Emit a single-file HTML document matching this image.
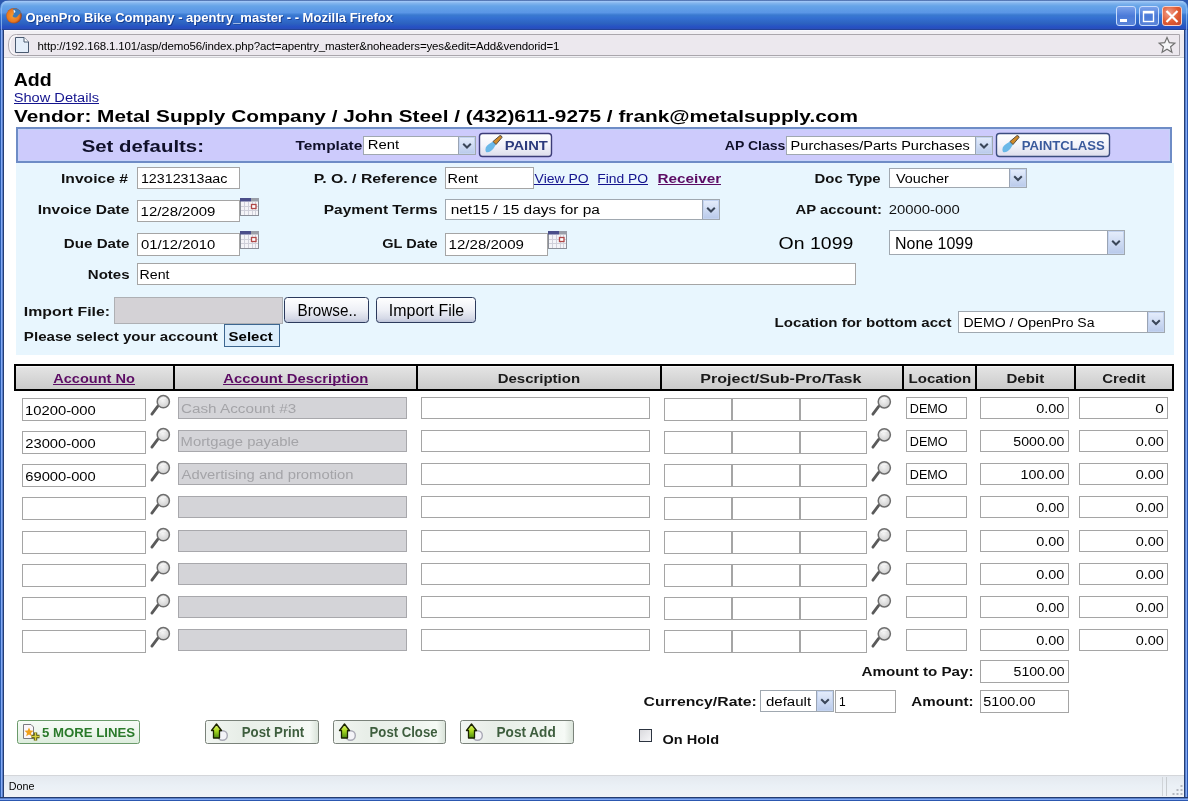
<!DOCTYPE html>
<html><head><meta charset="utf-8"><title>OpenPro</title>
<style>html,body{margin:0;padding:0;background:#fff;overflow:hidden;width:1188px;height:801px}svg{display:block;will-change:transform}text{font-family:"Liberation Sans",sans-serif;white-space:pre}</style>
</head><body>
<svg width="1188" height="801" viewBox="0 0 1188 801" font-family="Liberation Sans, sans-serif">
<defs>
<linearGradient id="gTitle" gradientUnits="userSpaceOnUse" x1="0" y1="0" x2="0" y2="30">
<stop offset="0" stop-color="#1c3f88"/><stop offset="0.04" stop-color="#a8ccf8"/><stop offset="0.1" stop-color="#84b6ee"/>
<stop offset="0.2" stop-color="#66a4e8"/><stop offset="0.42" stop-color="#5a96e6"/><stop offset="0.5" stop-color="#3a7ad0"/>
<stop offset="0.6" stop-color="#3470d2"/><stop offset="0.78" stop-color="#2c62c0"/><stop offset="0.9" stop-color="#2650c4"/>
<stop offset="0.96" stop-color="#2a4eb8"/><stop offset="1" stop-color="#1e3a80"/></linearGradient>
<linearGradient id="gHead" x1="0" y1="0" x2="0" y2="1">
<stop offset="0" stop-color="#ececec"/><stop offset="0.1" stop-color="#e2e2e2"/><stop offset="1" stop-color="#cbcbcb"/></linearGradient>
<linearGradient id="gDrop" x1="0" y1="0" x2="0" y2="1">
<stop offset="0" stop-color="#e6eefc"/><stop offset="1" stop-color="#b8c9ea"/></linearGradient>
<radialGradient id="gMag" cx="0.45" cy="0.4" r="0.6">
<stop offset="0" stop-color="#f4f4f4"/><stop offset="1" stop-color="#cfcfcf"/></radialGradient>
<linearGradient id="gXP" x1="0" y1="0" x2="0" y2="1">
<stop offset="0" stop-color="#ffffff"/><stop offset="0.5" stop-color="#eef0f6"/><stop offset="0.85" stop-color="#d4d8e6"/><stop offset="1" stop-color="#b8c0d6"/></linearGradient>
<linearGradient id="gChk" x1="0" y1="0" x2="1" y2="1">
<stop offset="0" stop-color="#d8d8dc"/><stop offset="1" stop-color="#f8f8fa"/></linearGradient>
<linearGradient id="gArrow" x1="0" y1="0" x2="0" y2="1">
<stop offset="0" stop-color="#e8f870"/><stop offset="0.5" stop-color="#a8d820"/><stop offset="1" stop-color="#4a8a10"/></linearGradient>
<linearGradient id="gPaint" x1="0" y1="0" x2="0" y2="1">
<stop offset="0" stop-color="#ffffff"/><stop offset="0.5" stop-color="#f4f4fa"/><stop offset="1" stop-color="#dcdcec"/></linearGradient>
<linearGradient id="gGreen" x1="0" y1="0" x2="0" y2="1">
<stop offset="0" stop-color="#f6fbf6"/><stop offset="0.5" stop-color="#eef6ee"/><stop offset="1" stop-color="#dcecdc"/></linearGradient>
<linearGradient id="gPost" x1="0" y1="0" x2="1" y2="0">
<stop offset="0" stop-color="#f2f6f2"/><stop offset="0.3" stop-color="#e8eee8"/><stop offset="0.7" stop-color="#eef4ee"/><stop offset="0.92" stop-color="#f6faf6"/><stop offset="1" stop-color="#d8e2d8"/></linearGradient>
<linearGradient id="gStatus" x1="0" y1="0" x2="0" y2="1">
<stop offset="0" stop-color="#e4e8ee"/><stop offset="0.5" stop-color="#eaf0f6"/><stop offset="1" stop-color="#f0f2f6"/></linearGradient>
<linearGradient id="gMin" x1="0" y1="0" x2="0" y2="1">
<stop offset="0" stop-color="#7ea4ec"/><stop offset="0.5" stop-color="#4a7ad8"/><stop offset="1" stop-color="#5a84d8"/></linearGradient>
<radialGradient id="gClose" cx="0.35" cy="0.35" r="0.8">
<stop offset="0" stop-color="#f0a090"/><stop offset="0.6" stop-color="#e05a30"/><stop offset="1" stop-color="#c84a30"/></radialGradient>
<radialGradient id="gFox" cx="0.45" cy="0.5" r="0.55">
<stop offset="0" stop-color="#f8a030"/><stop offset="0.7" stop-color="#e87820"/><stop offset="1" stop-color="#8a3a20"/></radialGradient>
<symbol id="cal" overflow="visible">
<rect x="0.5" y="0.5" width="18" height="17" fill="#f4f4f8" stroke="#8a8e98"/>
<rect x="0" y="0" width="11" height="3.5" fill="#4a4e8a"/>
<rect x="11" y="0" width="8" height="3.5" fill="#9a9ea8"/>
<path d="M4.5,4 V17 M8.5,4 V17 M12.5,4 V17 M15.5,4 V17 M1,8.5 H18 M1,12.5 H18" stroke="#d0d0da" stroke-width="1"/>
<rect x="11.5" y="6.5" width="4.5" height="4" fill="#fff" stroke="#b04848" stroke-width="1.3"/>
</symbol>
</defs>
<rect x="0" y="0" width="1188" height="801" fill="#2c58b0" />
<rect x="0" y="30" width="1" height="771" fill="#2a5cb0" />
<rect x="1" y="30" width="1" height="771" fill="#84aaf6" />
<rect x="2" y="30" width="1" height="771" fill="#5a80c8" />
<rect x="3" y="30" width="1" height="771" fill="#263e74" />
<rect x="1184" y="30" width="1" height="771" fill="#263e74" />
<rect x="1185" y="30" width="1" height="771" fill="#5a80c8" />
<rect x="1186" y="30" width="1" height="771" fill="#84aaf6" />
<rect x="1187" y="30" width="1" height="771" fill="#2c58b0" />
<rect x="0" y="797" width="1188" height="1" fill="#243c70" />
<rect x="0" y="798" width="1188" height="1" fill="#5a80c8" />
<rect x="0" y="799" width="1188" height="1" fill="#84aaf6" />
<rect x="0" y="800" width="1188" height="1" fill="#2c58b0" />
<path d="M0,30 V9 Q0,1 9,0 H1179 Q1188,1 1188,9 V30 Z" fill="url(#gTitle)"/>
<path d="M1.5,30 V9 Q1.5,2 9,1.5 H1179 Q1186.5,2 1186.5,9 V30" fill="none" stroke="#9cc4f8" stroke-width="1" opacity="0.7"/>
<circle cx="14" cy="15.7" r="7.8" fill="url(#gFox)"/>
<path d="M13,8.5 Q19.5,8 21,13 Q19,14 17,17 Q14,18.5 12.5,16 Q15,14 13,8.5 Z" fill="#3a7ab8"/>
<path d="M13.5,10 Q15,9.5 15.5,12 L14,13 Z" fill="#e8f0f8"/>
<text x="26.47" y="22.90" font-size="13.2" font-weight="bold" fill="#0a246a" textLength="367.58" lengthAdjust="spacingAndGlyphs" opacity="0.6">OpenPro Bike Company - apentry_master - - Mozilla Firefox</text>
<text x="25.47" y="21.90" font-size="13.2" font-weight="bold" fill="#ffffff" textLength="367.58" lengthAdjust="spacingAndGlyphs" >OpenPro Bike Company - apentry_master - - Mozilla Firefox</text>
<rect x="1116.5" y="6.5" width="19" height="19" rx="2.5" fill="url(#gMin)" stroke="#c8dcfc" stroke-width="1"/>
<rect x="1139.5" y="6.5" width="19" height="19" rx="2.5" fill="url(#gMin)" stroke="#c8dcfc" stroke-width="1"/>
<rect x="1120" y="19" width="7" height="3" fill="#fff"/>
<rect x="1143.5" y="11.5" width="10" height="10" fill="none" stroke="#fff" stroke-width="1.4"/><rect x="1143" y="11" width="11" height="2.5" fill="#fff"/>
<rect x="1162.5" y="6.5" width="19" height="19" rx="2.5" fill="url(#gClose)" stroke="#f8d0c8" stroke-width="1"/>
<path d="M1166.5,11 L1177.5,22 M1177.5,11 L1166.5,22" stroke="#fff" stroke-width="2.2"/>
<rect x="4" y="30" width="1180" height="28" fill="#eeebf0" />
<rect x="4" y="30" width="1180" height="1" fill="#f8f8fc" />
<rect x="4" y="31" width="1180" height="3" fill="#f2f0f4" />
<path d="M16.5,34.5 H1179.5 V55.5 H16.5 Q8.5,55.5 8.5,45 Q8.5,34.5 16.5,34.5 Z" fill="#ece8ee" stroke="#aaa6ac"/>
<path d="M17,35.5 Q10,36 9.8,45 Q10,54 17,54.5" fill="none" stroke="#ffffff" stroke-width="1.2" opacity="0.8"/>
<rect x="4" y="56" width="1180" height="1" fill="#f0f0f4" />
<rect x="4" y="57" width="1180" height="1" fill="#d0d0d4" />
<path d="M15.5,37.5 H24 L28.5,42 V52.5 H15.5 Z" fill="#e4eefa" stroke="#4a5a70"/>
<path d="M24,37.5 V42 H28.5" fill="#fff" stroke="#4a5a70"/>
<text x="37.59" y="50.00" font-size="11.5" font-weight="normal" fill="#000" textLength="521.92" lengthAdjust="spacing" >http://192.168.1.101/asp/demo56/index.php?act=apentry_master&amp;noheaders=yes&amp;edit=Add&amp;vendorid=1</text>
<path d="M1167,37.5 L1169.3,42.7 L1174.8,43.2 L1170.6,46.8 L1171.9,52.3 L1167,49.3 L1162.1,52.3 L1163.4,46.8 L1159.2,43.2 L1164.7,42.7 Z" fill="#f6f6f8" stroke="#707070" stroke-width="1.2"/>
<rect x="4" y="58" width="1180" height="717" fill="#ffffff" />
<text x="13.65" y="85.80" font-size="18" font-weight="bold" fill="#000" textLength="38.00" lengthAdjust="spacingAndGlyphs" >Add</text>
<text x="13.76" y="101.90" font-size="12" font-weight="normal" fill="#14148e" textLength="85.27" lengthAdjust="spacingAndGlyphs" >Show Details</text>
<rect x="14" y="103" width="85" height="1" fill="#14148e" />
<text x="13.92" y="121.60" font-size="16" font-weight="bold" fill="#000" textLength="844.05" lengthAdjust="spacingAndGlyphs" >Vendor: Metal Supply Company / John Steel / (432)611-9275 / frank@metalsupply.com</text>
<rect x="16" y="127" width="1156" height="36" fill="#cdcbfc" />
<rect x="17" y="128" width="1154" height="34" fill="none" stroke="#6e8cc6" stroke-width="2" />
<rect x="18.5" y="129.5" width="1151" height="31" fill="none" stroke="#c6d2fa" stroke-width="1" />
<text x="81.70" y="151.60" font-size="16.5" font-weight="bold" fill="#10102a" textLength="122.28" lengthAdjust="spacingAndGlyphs" >Set defaults:</text>
<text x="295.48" y="149.60" font-size="12.5" font-weight="bold" fill="#10102a" textLength="66.78" lengthAdjust="spacingAndGlyphs" >Template</text>
<rect x="363.5" y="136.5" width="112" height="18" fill="#fff" stroke="#a0a8b0" stroke-width="1" />
<rect x="459" y="137" width="16" height="17" fill="url(#gDrop)"/>
<rect x="459.5" y="137.5" width="15" height="16" fill="none" stroke="#c3d3f0"/>
<path d="M463.2,143.7 L467.0,147.5 L470.8,143.7" fill="none" stroke="#3a4658" stroke-width="2"/>
<line x1="458.5" y1="137" x2="458.5" y2="154" stroke="#9aa4b4"/>
<text x="367.74" y="149.40" font-size="12" font-weight="normal" fill="#000" textLength="31.35" lengthAdjust="spacingAndGlyphs" >Rent</text>
<rect x="479.5" y="133.5" width="72" height="23" rx="3" fill="url(#gPaint)" stroke="#3c3c78" stroke-width="1.4"/>
<path d="M486,152 Q484,147 489,144 L493,141.5 L496,144.5 L493.5,148.5 Q490,153 486,152 Z" fill="#6ab8e8"/>
<path d="M493,141.5 L500,135.5 Q502,135.5 502,137.5 L496,144.5 Z" fill="#d08a2a" stroke="#333" stroke-width="0.8"/>
<text x="504.72" y="149.90" font-size="13.5" font-weight="bold" fill="#2c3a7c" textLength="43.12" lengthAdjust="spacingAndGlyphs" >PAINT</text>
<text x="724.79" y="149.70" font-size="12.5" font-weight="bold" fill="#10102a" textLength="60.64" lengthAdjust="spacingAndGlyphs" >AP Class</text>
<rect x="786.5" y="136.5" width="206" height="18" fill="#fff" stroke="#a0a8b0" stroke-width="1" />
<rect x="976" y="137" width="16" height="17" fill="url(#gDrop)"/>
<rect x="976.5" y="137.5" width="15" height="16" fill="none" stroke="#c3d3f0"/>
<path d="M980.2,143.7 L984.0,147.5 L987.8,143.7" fill="none" stroke="#3a4658" stroke-width="2"/>
<line x1="975.5" y1="137" x2="975.5" y2="154" stroke="#9aa4b4"/>
<text x="790.64" y="149.70" font-size="12" font-weight="normal" fill="#000" textLength="179.17" lengthAdjust="spacingAndGlyphs" >Purchases/Parts Purchases</text>
<rect x="996.5" y="133.5" width="113" height="23" rx="3" fill="url(#gPaint)" stroke="#3c4c80" stroke-width="1.4"/>
<path d="M1003,152 Q1001,147 1006,144 L1010,141.5 L1013,144.5 L1010.5,148.5 Q1007,153 1003,152 Z" fill="#6ab8e8"/>
<path d="M1010,141.5 L1017,135.5 Q1019,135.5 1019,137.5 L1013,144.5 Z" fill="#d08a2a" stroke="#333" stroke-width="0.8"/>
<text x="1021.72" y="149.90" font-size="13.5" font-weight="bold" fill="#3a5a9c" textLength="83.05" lengthAdjust="spacingAndGlyphs" >PAINTCLASS</text>
<rect x="16" y="163" width="1158" height="192" fill="#e8f6fe" />
<text x="60.99" y="182.70" font-size="12.5" font-weight="bold" fill="#111111" textLength="67.00" lengthAdjust="spacingAndGlyphs" >Invoice #</text>
<rect x="137.5" y="167.5" width="102" height="21" fill="#fff" stroke="#a5a5a5" stroke-width="1" />
<text x="140.90" y="182.70" font-size="12" font-weight="normal" fill="#000" textLength="86.52" lengthAdjust="spacingAndGlyphs" >12312313aac</text>
<text x="313.69" y="182.80" font-size="12.5" font-weight="bold" fill="#111111" textLength="123.74" lengthAdjust="spacingAndGlyphs" >P. O. / Reference</text>
<rect x="445.5" y="167.5" width="88" height="21" fill="#fff" stroke="#a5a5a5" stroke-width="1" />
<text x="447.54" y="182.80" font-size="12" font-weight="normal" fill="#000" textLength="30.55" lengthAdjust="spacingAndGlyphs" >Rent</text>
<text x="534.64" y="182.70" font-size="12" font-weight="normal" fill="#14148e" textLength="54.03" lengthAdjust="spacingAndGlyphs" >View PO</text>
<rect x="534" y="184" width="55" height="1" fill="#14148e" />
<text x="597.24" y="182.70" font-size="12" font-weight="normal" fill="#14148e" textLength="50.84" lengthAdjust="spacingAndGlyphs" >Find PO</text>
<rect x="598" y="184" width="50" height="1" fill="#14148e" />
<text x="657.49" y="182.70" font-size="12.5" font-weight="bold" fill="#5c0c64" textLength="63.80" lengthAdjust="spacingAndGlyphs" >Receiver</text>
<rect x="658" y="184" width="63" height="1" fill="#5c0c64" />
<text x="814.59" y="183.10" font-size="12.5" font-weight="bold" fill="#111111" textLength="66.07" lengthAdjust="spacingAndGlyphs" >Doc Type</text>
<rect x="889.5" y="168.5" width="137" height="19" fill="#fff" stroke="#a0a8b0" stroke-width="1" />
<rect x="1010" y="169" width="16" height="18" fill="url(#gDrop)"/>
<rect x="1010.5" y="169.5" width="15" height="17" fill="none" stroke="#c3d3f0"/>
<path d="M1014.2,176.2 L1018.0,180.0 L1021.8,176.2" fill="none" stroke="#3a4658" stroke-width="2"/>
<line x1="1009.5" y1="169" x2="1009.5" y2="187" stroke="#9aa4b4"/>
<text x="895.94" y="183.00" font-size="12" font-weight="normal" fill="#000" textLength="52.80" lengthAdjust="spacingAndGlyphs" >Voucher</text>
<text x="37.69" y="214.20" font-size="12.5" font-weight="bold" fill="#111111" textLength="91.77" lengthAdjust="spacingAndGlyphs" >Invoice Date</text>
<rect x="137.5" y="200.5" width="102" height="21" fill="#fff" stroke="#a5a5a5" stroke-width="1" />
<text x="140.60" y="215.80" font-size="12" font-weight="normal" fill="#000" textLength="74.74" lengthAdjust="spacingAndGlyphs" >12/28/2009</text>
<use href="#cal" x="240" y="198"/>
<text x="323.79" y="213.90" font-size="12.5" font-weight="bold" fill="#111111" textLength="113.70" lengthAdjust="spacingAndGlyphs" >Payment Terms</text>
<rect x="445.5" y="199.5" width="274" height="20" fill="#fff" stroke="#a0a8b0" stroke-width="1" />
<rect x="703" y="200" width="16" height="19" fill="url(#gDrop)"/>
<rect x="703.5" y="200.5" width="15" height="18" fill="none" stroke="#c3d3f0"/>
<path d="M707.2,207.7 L711.0,211.5 L714.8,207.7" fill="none" stroke="#3a4658" stroke-width="2"/>
<line x1="702.5" y1="200" x2="702.5" y2="219" stroke="#9aa4b4"/>
<text x="450.72" y="213.50" font-size="12" font-weight="normal" fill="#000" textLength="149.22" lengthAdjust="spacingAndGlyphs" >net15 / 15 days for pa</text>
<text x="795.49" y="214.40" font-size="12.5" font-weight="bold" fill="#111111" textLength="86.41" lengthAdjust="spacingAndGlyphs" >AP account:</text>
<text x="888.80" y="214.40" font-size="12" font-weight="normal" fill="#111" textLength="71.05" lengthAdjust="spacingAndGlyphs" >20000-000</text>
<text x="63.89" y="247.90" font-size="12.5" font-weight="bold" fill="#111111" textLength="65.55" lengthAdjust="spacingAndGlyphs" >Due Date</text>
<rect x="137.5" y="233.5" width="102" height="22" fill="#fff" stroke="#a5a5a5" stroke-width="1" />
<text x="141.02" y="248.50" font-size="12" font-weight="normal" fill="#000" textLength="74.20" lengthAdjust="spacingAndGlyphs" >01/12/2010</text>
<use href="#cal" x="240" y="231"/>
<text x="382.20" y="248.00" font-size="12.5" font-weight="bold" fill="#111111" textLength="55.45" lengthAdjust="spacingAndGlyphs" >GL Date</text>
<rect x="445.5" y="233.5" width="102" height="22" fill="#fff" stroke="#a5a5a5" stroke-width="1" />
<text x="448.60" y="248.90" font-size="12" font-weight="normal" fill="#000" textLength="75.34" lengthAdjust="spacingAndGlyphs" >12/28/2009</text>
<use href="#cal" x="548" y="231"/>
<text x="778.63" y="248.90" font-size="17" font-weight="normal" fill="#000" textLength="74.66" lengthAdjust="spacingAndGlyphs" >On 1099</text>
<rect x="889.5" y="230.5" width="235" height="24" fill="#fff" stroke="#a0a8b0" stroke-width="1" />
<rect x="1108" y="231" width="16" height="23" fill="url(#gDrop)"/>
<rect x="1108.5" y="231.5" width="15" height="22" fill="none" stroke="#c3d3f0"/>
<path d="M1112.2,240.7 L1116.0,244.5 L1119.8,240.7" fill="none" stroke="#3a4658" stroke-width="2"/>
<line x1="1107.5" y1="231" x2="1107.5" y2="254" stroke="#9aa4b4"/>
<text x="895.08" y="248.60" font-size="16.5" font-weight="normal" fill="#000" textLength="78.02" lengthAdjust="spacingAndGlyphs" >None 1099</text>
<text x="87.79" y="278.60" font-size="12.5" font-weight="bold" fill="#111111" textLength="41.76" lengthAdjust="spacingAndGlyphs" >Notes</text>
<rect x="137.5" y="263.5" width="718" height="21" fill="#fff" stroke="#a5a5a5" stroke-width="1" />
<text x="139.54" y="278.60" font-size="12" font-weight="normal" fill="#000" textLength="29.95" lengthAdjust="spacingAndGlyphs" >Rent</text>
<text x="23.89" y="316.30" font-size="12.5" font-weight="bold" fill="#111111" textLength="86.15" lengthAdjust="spacingAndGlyphs" >Import File:</text>
<rect x="114.5" y="297.5" width="168" height="26" fill="#d4d2d6" stroke="#aeb0b4" stroke-width="1" />
<rect x="284.5" y="297.5" width="84" height="25" rx="3" fill="url(#gXP)" stroke="#2c3a5c"/>
<text x="297.62" y="315.90" font-size="16" font-weight="normal" fill="#000" textLength="59.30" lengthAdjust="spacingAndGlyphs" >Browse..</text>
<rect x="376.5" y="297.5" width="99" height="25" rx="3" fill="url(#gXP)" stroke="#2c3a5c"/>
<text x="388.86" y="315.90" font-size="16" font-weight="normal" fill="#000" textLength="75.21" lengthAdjust="spacingAndGlyphs" >Import File</text>
<text x="23.89" y="341.10" font-size="12.5" font-weight="bold" fill="#111111" textLength="193.80" lengthAdjust="spacingAndGlyphs" >Please select your account</text>
<rect x="224.5" y="324.5" width="55" height="22" fill="#dceefc" stroke="#3c6690" stroke-width="1" />
<text x="228.62" y="341.00" font-size="12.5" font-weight="bold" fill="#000" textLength="44.12" lengthAdjust="spacingAndGlyphs" >Select</text>
<text x="774.59" y="327.00" font-size="12.5" font-weight="bold" fill="#111111" textLength="176.87" lengthAdjust="spacingAndGlyphs" >Location for bottom acct</text>
<rect x="958.5" y="311.5" width="206" height="21" fill="#fff" stroke="#a0a8b0" stroke-width="1" />
<rect x="1148" y="312" width="16" height="20" fill="url(#gDrop)"/>
<rect x="1148.5" y="312.5" width="15" height="19" fill="none" stroke="#c3d3f0"/>
<path d="M1152.2,320.2 L1156.0,324.0 L1159.8,320.2" fill="none" stroke="#3a4658" stroke-width="2"/>
<line x1="1147.5" y1="312" x2="1147.5" y2="332" stroke="#9aa4b4"/>
<text x="963.44" y="327.00" font-size="12" font-weight="normal" fill="#000" textLength="131.09" lengthAdjust="spacingAndGlyphs" >DEMO / OpenPro Sa</text>
<rect x="14" y="364" width="1160" height="27" fill="#000" />
<rect x="16" y="366" width="157" height="23" fill="url(#gHead)" />
<rect x="16" y="366" width="157" height="1" fill="#f4f4f4" />
<rect x="175" y="366" width="241" height="23" fill="url(#gHead)" />
<rect x="175" y="366" width="241" height="1" fill="#f4f4f4" />
<rect x="418" y="366" width="242" height="23" fill="url(#gHead)" />
<rect x="418" y="366" width="242" height="1" fill="#f4f4f4" />
<rect x="662" y="366" width="240" height="23" fill="url(#gHead)" />
<rect x="662" y="366" width="240" height="1" fill="#f4f4f4" />
<rect x="904" y="366" width="71" height="23" fill="url(#gHead)" />
<rect x="904" y="366" width="71" height="1" fill="#f4f4f4" />
<rect x="977" y="366" width="97" height="23" fill="url(#gHead)" />
<rect x="977" y="366" width="97" height="1" fill="#f4f4f4" />
<rect x="1076" y="366" width="96" height="23" fill="url(#gHead)" />
<rect x="1076" y="366" width="96" height="1" fill="#f4f4f4" />
<text x="53.19" y="382.70" font-size="12.5" font-weight="bold" fill="#5c0c64" textLength="81.73" lengthAdjust="spacingAndGlyphs" >Account No</text>
<rect x="53" y="384" width="82" height="1" fill="#5c0c64" />
<text x="223.39" y="382.70" font-size="12.5" font-weight="bold" fill="#5c0c64" textLength="145.05" lengthAdjust="spacingAndGlyphs" >Account Description</text>
<rect x="223" y="384" width="145" height="1" fill="#5c0c64" />
<text x="497.69" y="382.70" font-size="12.5" font-weight="bold" fill="#1a1a1a" textLength="82.38" lengthAdjust="spacingAndGlyphs" >Description</text>
<text x="700.39" y="382.70" font-size="12.5" font-weight="bold" fill="#1a1a1a" textLength="161.11" lengthAdjust="spacingAndGlyphs" >Project/Sub-Pro/Task</text>
<text x="908.59" y="382.70" font-size="12.5" font-weight="bold" fill="#1a1a1a" textLength="62.68" lengthAdjust="spacingAndGlyphs" >Location</text>
<text x="1006.49" y="382.70" font-size="12.5" font-weight="bold" fill="#1a1a1a" textLength="37.70" lengthAdjust="spacingAndGlyphs" >Debit</text>
<text x="1102.20" y="382.70" font-size="12.5" font-weight="bold" fill="#1a1a1a" textLength="43.18" lengthAdjust="spacingAndGlyphs" >Credit</text>
<rect x="22.5" y="398.5" width="123" height="22" fill="#fff" stroke="#a5a5a5" stroke-width="1" />
<text x="25.00" y="414.60" font-size="12" font-weight="normal" fill="#000" textLength="70.75" lengthAdjust="spacingAndGlyphs" >10200-000</text>
<g><path d="M157.7,406.3 L151.9,414.1" stroke="#5a5a5a" stroke-width="2.8" stroke-linecap="round"/><circle cx="163.3" cy="401.7" r="6.1" fill="url(#gMag)" stroke="#6e6e6e" stroke-width="1.5"/><path d="M159.8,399.7 Q162.3,397.2 165.8,398.2" fill="none" stroke="#ffffff" stroke-width="1" opacity="0.8"/></g>
<rect x="178.5" y="397.5" width="228" height="21" fill="#d4d4d8" stroke="#a8a8ac" stroke-width="1" />
<text x="181.00" y="412.90" font-size="12" font-weight="normal" fill="#a4a4a8" textLength="115.29" lengthAdjust="spacingAndGlyphs" >Cash Account #3</text>
<rect x="421.5" y="397.5" width="228" height="21" fill="#fff" stroke="#a5a5a5" stroke-width="1" />
<rect x="664.5" y="398.5" width="67" height="22" fill="#fff" stroke="#a5a5a5" stroke-width="1" />
<rect x="732.5" y="398.5" width="67" height="22" fill="#fff" stroke="#a5a5a5" stroke-width="1" />
<rect x="800.5" y="398.5" width="66" height="22" fill="#fff" stroke="#a5a5a5" stroke-width="1" />
<g><path d="M878.7,406.4 L872.9,414.2" stroke="#5a5a5a" stroke-width="2.8" stroke-linecap="round"/><circle cx="884.3" cy="401.8" r="6.1" fill="url(#gMag)" stroke="#6e6e6e" stroke-width="1.5"/><path d="M880.8,399.8 Q883.3,397.3 886.8,398.3" fill="none" stroke="#ffffff" stroke-width="1" opacity="0.8"/></g>
<rect x="906.5" y="397.5" width="60" height="21" fill="#fff" stroke="#a5a5a5" stroke-width="1" />
<text x="909.84" y="412.90" font-size="12" font-weight="normal" fill="#000" textLength="37.86" lengthAdjust="spacingAndGlyphs" >DEMO</text>
<rect x="980.5" y="397.5" width="88" height="21" fill="#fff" stroke="#a5a5a5" stroke-width="1" />
<text x="1036.26" y="412.90" font-size="12" font-weight="normal" fill="#000" textLength="28.18" lengthAdjust="spacingAndGlyphs" >0.00</text>
<rect x="1079.5" y="397.5" width="88" height="21" fill="#fff" stroke="#a5a5a5" stroke-width="1" />
<text x="1155.39" y="412.90" font-size="12" font-weight="normal" fill="#000" textLength="8.55" lengthAdjust="spacingAndGlyphs" >0</text>
<rect x="22.5" y="431.5" width="123" height="22" fill="#fff" stroke="#a5a5a5" stroke-width="1" />
<text x="25.30" y="447.60" font-size="12" font-weight="normal" fill="#000" textLength="70.45" lengthAdjust="spacingAndGlyphs" >23000-000</text>
<g><path d="M157.7,439.3 L151.9,447.1" stroke="#5a5a5a" stroke-width="2.8" stroke-linecap="round"/><circle cx="163.3" cy="434.7" r="6.1" fill="url(#gMag)" stroke="#6e6e6e" stroke-width="1.5"/><path d="M159.8,432.7 Q162.3,430.2 165.8,431.2" fill="none" stroke="#ffffff" stroke-width="1" opacity="0.8"/></g>
<rect x="178.5" y="430.5" width="228" height="21" fill="#d4d4d8" stroke="#a8a8ac" stroke-width="1" />
<text x="180.64" y="445.90" font-size="12" font-weight="normal" fill="#a4a4a8" textLength="118.31" lengthAdjust="spacingAndGlyphs" >Mortgage payable</text>
<rect x="421.5" y="430.5" width="228" height="21" fill="#fff" stroke="#a5a5a5" stroke-width="1" />
<rect x="664.5" y="431.5" width="67" height="22" fill="#fff" stroke="#a5a5a5" stroke-width="1" />
<rect x="732.5" y="431.5" width="67" height="22" fill="#fff" stroke="#a5a5a5" stroke-width="1" />
<rect x="800.5" y="431.5" width="66" height="22" fill="#fff" stroke="#a5a5a5" stroke-width="1" />
<g><path d="M878.7,439.4 L872.9,447.2" stroke="#5a5a5a" stroke-width="2.8" stroke-linecap="round"/><circle cx="884.3" cy="434.8" r="6.1" fill="url(#gMag)" stroke="#6e6e6e" stroke-width="1.5"/><path d="M880.8,432.8 Q883.3,430.3 886.8,431.3" fill="none" stroke="#ffffff" stroke-width="1" opacity="0.8"/></g>
<rect x="906.5" y="430.5" width="60" height="21" fill="#fff" stroke="#a5a5a5" stroke-width="1" />
<text x="909.84" y="445.90" font-size="12" font-weight="normal" fill="#000" textLength="37.86" lengthAdjust="spacingAndGlyphs" >DEMO</text>
<rect x="980.5" y="430.5" width="88" height="21" fill="#fff" stroke="#a5a5a5" stroke-width="1" />
<text x="1013.36" y="445.90" font-size="12" font-weight="normal" fill="#000" textLength="51.06" lengthAdjust="spacingAndGlyphs" >5000.00</text>
<rect x="1079.5" y="430.5" width="88" height="21" fill="#fff" stroke="#a5a5a5" stroke-width="1" />
<text x="1135.76" y="445.90" font-size="12" font-weight="normal" fill="#000" textLength="28.18" lengthAdjust="spacingAndGlyphs" >0.00</text>
<rect x="22.5" y="464.5" width="123" height="22" fill="#fff" stroke="#a5a5a5" stroke-width="1" />
<text x="25.30" y="480.60" font-size="12" font-weight="normal" fill="#000" textLength="70.45" lengthAdjust="spacingAndGlyphs" >69000-000</text>
<g><path d="M157.7,472.3 L151.9,480.1" stroke="#5a5a5a" stroke-width="2.8" stroke-linecap="round"/><circle cx="163.3" cy="467.7" r="6.1" fill="url(#gMag)" stroke="#6e6e6e" stroke-width="1.5"/><path d="M159.8,465.7 Q162.3,463.2 165.8,464.2" fill="none" stroke="#ffffff" stroke-width="1" opacity="0.8"/></g>
<rect x="178.5" y="463.5" width="228" height="21" fill="#d4d4d8" stroke="#a8a8ac" stroke-width="1" />
<text x="181.60" y="478.90" font-size="12" font-weight="normal" fill="#a4a4a8" textLength="171.92" lengthAdjust="spacingAndGlyphs" >Advertising and promotion</text>
<rect x="421.5" y="463.5" width="228" height="21" fill="#fff" stroke="#a5a5a5" stroke-width="1" />
<rect x="664.5" y="464.5" width="67" height="22" fill="#fff" stroke="#a5a5a5" stroke-width="1" />
<rect x="732.5" y="464.5" width="67" height="22" fill="#fff" stroke="#a5a5a5" stroke-width="1" />
<rect x="800.5" y="464.5" width="66" height="22" fill="#fff" stroke="#a5a5a5" stroke-width="1" />
<g><path d="M878.7,472.4 L872.9,480.2" stroke="#5a5a5a" stroke-width="2.8" stroke-linecap="round"/><circle cx="884.3" cy="467.8" r="6.1" fill="url(#gMag)" stroke="#6e6e6e" stroke-width="1.5"/><path d="M880.8,465.8 Q883.3,463.3 886.8,464.3" fill="none" stroke="#ffffff" stroke-width="1" opacity="0.8"/></g>
<rect x="906.5" y="463.5" width="60" height="21" fill="#fff" stroke="#a5a5a5" stroke-width="1" />
<text x="909.84" y="478.90" font-size="12" font-weight="normal" fill="#000" textLength="37.86" lengthAdjust="spacingAndGlyphs" >DEMO</text>
<rect x="980.5" y="463.5" width="88" height="21" fill="#fff" stroke="#a5a5a5" stroke-width="1" />
<text x="1020.57" y="478.90" font-size="12" font-weight="normal" fill="#000" textLength="43.83" lengthAdjust="spacingAndGlyphs" >100.00</text>
<rect x="1079.5" y="463.5" width="88" height="21" fill="#fff" stroke="#a5a5a5" stroke-width="1" />
<text x="1135.76" y="478.90" font-size="12" font-weight="normal" fill="#000" textLength="28.18" lengthAdjust="spacingAndGlyphs" >0.00</text>
<rect x="22.5" y="497.5" width="123" height="22" fill="#fff" stroke="#a5a5a5" stroke-width="1" />
<g><path d="M157.7,505.3 L151.9,513.1" stroke="#5a5a5a" stroke-width="2.8" stroke-linecap="round"/><circle cx="163.3" cy="500.7" r="6.1" fill="url(#gMag)" stroke="#6e6e6e" stroke-width="1.5"/><path d="M159.8,498.7 Q162.3,496.2 165.8,497.2" fill="none" stroke="#ffffff" stroke-width="1" opacity="0.8"/></g>
<rect x="178.5" y="496.5" width="228" height="21" fill="#d4d4d8" stroke="#a8a8ac" stroke-width="1" />
<rect x="421.5" y="496.5" width="228" height="21" fill="#fff" stroke="#a5a5a5" stroke-width="1" />
<rect x="664.5" y="497.5" width="67" height="22" fill="#fff" stroke="#a5a5a5" stroke-width="1" />
<rect x="732.5" y="497.5" width="67" height="22" fill="#fff" stroke="#a5a5a5" stroke-width="1" />
<rect x="800.5" y="497.5" width="66" height="22" fill="#fff" stroke="#a5a5a5" stroke-width="1" />
<g><path d="M878.7,505.4 L872.9,513.2" stroke="#5a5a5a" stroke-width="2.8" stroke-linecap="round"/><circle cx="884.3" cy="500.8" r="6.1" fill="url(#gMag)" stroke="#6e6e6e" stroke-width="1.5"/><path d="M880.8,498.8 Q883.3,496.3 886.8,497.3" fill="none" stroke="#ffffff" stroke-width="1" opacity="0.8"/></g>
<rect x="906.5" y="496.5" width="60" height="21" fill="#fff" stroke="#a5a5a5" stroke-width="1" />
<rect x="980.5" y="496.5" width="88" height="21" fill="#fff" stroke="#a5a5a5" stroke-width="1" />
<text x="1036.26" y="511.90" font-size="12" font-weight="normal" fill="#000" textLength="28.18" lengthAdjust="spacingAndGlyphs" >0.00</text>
<rect x="1079.5" y="496.5" width="88" height="21" fill="#fff" stroke="#a5a5a5" stroke-width="1" />
<text x="1135.76" y="511.90" font-size="12" font-weight="normal" fill="#000" textLength="28.18" lengthAdjust="spacingAndGlyphs" >0.00</text>
<rect x="22.5" y="531.5" width="123" height="22" fill="#fff" stroke="#a5a5a5" stroke-width="1" />
<g><path d="M157.7,539.3 L151.9,547.1" stroke="#5a5a5a" stroke-width="2.8" stroke-linecap="round"/><circle cx="163.3" cy="534.7" r="6.1" fill="url(#gMag)" stroke="#6e6e6e" stroke-width="1.5"/><path d="M159.8,532.7 Q162.3,530.2 165.8,531.2" fill="none" stroke="#ffffff" stroke-width="1" opacity="0.8"/></g>
<rect x="178.5" y="530.5" width="228" height="21" fill="#d4d4d8" stroke="#a8a8ac" stroke-width="1" />
<rect x="421.5" y="530.5" width="228" height="21" fill="#fff" stroke="#a5a5a5" stroke-width="1" />
<rect x="664.5" y="531.5" width="67" height="22" fill="#fff" stroke="#a5a5a5" stroke-width="1" />
<rect x="732.5" y="531.5" width="67" height="22" fill="#fff" stroke="#a5a5a5" stroke-width="1" />
<rect x="800.5" y="531.5" width="66" height="22" fill="#fff" stroke="#a5a5a5" stroke-width="1" />
<g><path d="M878.7,539.4 L872.9,547.2" stroke="#5a5a5a" stroke-width="2.8" stroke-linecap="round"/><circle cx="884.3" cy="534.8" r="6.1" fill="url(#gMag)" stroke="#6e6e6e" stroke-width="1.5"/><path d="M880.8,532.8 Q883.3,530.3 886.8,531.3" fill="none" stroke="#ffffff" stroke-width="1" opacity="0.8"/></g>
<rect x="906.5" y="530.5" width="60" height="21" fill="#fff" stroke="#a5a5a5" stroke-width="1" />
<rect x="980.5" y="530.5" width="88" height="21" fill="#fff" stroke="#a5a5a5" stroke-width="1" />
<text x="1036.26" y="545.90" font-size="12" font-weight="normal" fill="#000" textLength="28.18" lengthAdjust="spacingAndGlyphs" >0.00</text>
<rect x="1079.5" y="530.5" width="88" height="21" fill="#fff" stroke="#a5a5a5" stroke-width="1" />
<text x="1135.76" y="545.90" font-size="12" font-weight="normal" fill="#000" textLength="28.18" lengthAdjust="spacingAndGlyphs" >0.00</text>
<rect x="22.5" y="564.5" width="123" height="22" fill="#fff" stroke="#a5a5a5" stroke-width="1" />
<g><path d="M157.7,572.3 L151.9,580.1" stroke="#5a5a5a" stroke-width="2.8" stroke-linecap="round"/><circle cx="163.3" cy="567.7" r="6.1" fill="url(#gMag)" stroke="#6e6e6e" stroke-width="1.5"/><path d="M159.8,565.7 Q162.3,563.2 165.8,564.2" fill="none" stroke="#ffffff" stroke-width="1" opacity="0.8"/></g>
<rect x="178.5" y="563.5" width="228" height="21" fill="#d4d4d8" stroke="#a8a8ac" stroke-width="1" />
<rect x="421.5" y="563.5" width="228" height="21" fill="#fff" stroke="#a5a5a5" stroke-width="1" />
<rect x="664.5" y="564.5" width="67" height="22" fill="#fff" stroke="#a5a5a5" stroke-width="1" />
<rect x="732.5" y="564.5" width="67" height="22" fill="#fff" stroke="#a5a5a5" stroke-width="1" />
<rect x="800.5" y="564.5" width="66" height="22" fill="#fff" stroke="#a5a5a5" stroke-width="1" />
<g><path d="M878.7,572.4 L872.9,580.2" stroke="#5a5a5a" stroke-width="2.8" stroke-linecap="round"/><circle cx="884.3" cy="567.8" r="6.1" fill="url(#gMag)" stroke="#6e6e6e" stroke-width="1.5"/><path d="M880.8,565.8 Q883.3,563.3 886.8,564.3" fill="none" stroke="#ffffff" stroke-width="1" opacity="0.8"/></g>
<rect x="906.5" y="563.5" width="60" height="21" fill="#fff" stroke="#a5a5a5" stroke-width="1" />
<rect x="980.5" y="563.5" width="88" height="21" fill="#fff" stroke="#a5a5a5" stroke-width="1" />
<text x="1036.26" y="578.90" font-size="12" font-weight="normal" fill="#000" textLength="28.18" lengthAdjust="spacingAndGlyphs" >0.00</text>
<rect x="1079.5" y="563.5" width="88" height="21" fill="#fff" stroke="#a5a5a5" stroke-width="1" />
<text x="1135.76" y="578.90" font-size="12" font-weight="normal" fill="#000" textLength="28.18" lengthAdjust="spacingAndGlyphs" >0.00</text>
<rect x="22.5" y="597.5" width="123" height="22" fill="#fff" stroke="#a5a5a5" stroke-width="1" />
<g><path d="M157.7,605.3 L151.9,613.1" stroke="#5a5a5a" stroke-width="2.8" stroke-linecap="round"/><circle cx="163.3" cy="600.7" r="6.1" fill="url(#gMag)" stroke="#6e6e6e" stroke-width="1.5"/><path d="M159.8,598.7 Q162.3,596.2 165.8,597.2" fill="none" stroke="#ffffff" stroke-width="1" opacity="0.8"/></g>
<rect x="178.5" y="596.5" width="228" height="21" fill="#d4d4d8" stroke="#a8a8ac" stroke-width="1" />
<rect x="421.5" y="596.5" width="228" height="21" fill="#fff" stroke="#a5a5a5" stroke-width="1" />
<rect x="664.5" y="597.5" width="67" height="22" fill="#fff" stroke="#a5a5a5" stroke-width="1" />
<rect x="732.5" y="597.5" width="67" height="22" fill="#fff" stroke="#a5a5a5" stroke-width="1" />
<rect x="800.5" y="597.5" width="66" height="22" fill="#fff" stroke="#a5a5a5" stroke-width="1" />
<g><path d="M878.7,605.4 L872.9,613.2" stroke="#5a5a5a" stroke-width="2.8" stroke-linecap="round"/><circle cx="884.3" cy="600.8" r="6.1" fill="url(#gMag)" stroke="#6e6e6e" stroke-width="1.5"/><path d="M880.8,598.8 Q883.3,596.3 886.8,597.3" fill="none" stroke="#ffffff" stroke-width="1" opacity="0.8"/></g>
<rect x="906.5" y="596.5" width="60" height="21" fill="#fff" stroke="#a5a5a5" stroke-width="1" />
<rect x="980.5" y="596.5" width="88" height="21" fill="#fff" stroke="#a5a5a5" stroke-width="1" />
<text x="1036.26" y="611.90" font-size="12" font-weight="normal" fill="#000" textLength="28.18" lengthAdjust="spacingAndGlyphs" >0.00</text>
<rect x="1079.5" y="596.5" width="88" height="21" fill="#fff" stroke="#a5a5a5" stroke-width="1" />
<text x="1135.76" y="611.90" font-size="12" font-weight="normal" fill="#000" textLength="28.18" lengthAdjust="spacingAndGlyphs" >0.00</text>
<rect x="22.5" y="630.5" width="123" height="22" fill="#fff" stroke="#a5a5a5" stroke-width="1" />
<g><path d="M157.7,638.3 L151.9,646.1" stroke="#5a5a5a" stroke-width="2.8" stroke-linecap="round"/><circle cx="163.3" cy="633.7" r="6.1" fill="url(#gMag)" stroke="#6e6e6e" stroke-width="1.5"/><path d="M159.8,631.7 Q162.3,629.2 165.8,630.2" fill="none" stroke="#ffffff" stroke-width="1" opacity="0.8"/></g>
<rect x="178.5" y="629.5" width="228" height="21" fill="#d4d4d8" stroke="#a8a8ac" stroke-width="1" />
<rect x="421.5" y="629.5" width="228" height="21" fill="#fff" stroke="#a5a5a5" stroke-width="1" />
<rect x="664.5" y="630.5" width="67" height="22" fill="#fff" stroke="#a5a5a5" stroke-width="1" />
<rect x="732.5" y="630.5" width="67" height="22" fill="#fff" stroke="#a5a5a5" stroke-width="1" />
<rect x="800.5" y="630.5" width="66" height="22" fill="#fff" stroke="#a5a5a5" stroke-width="1" />
<g><path d="M878.7,638.4 L872.9,646.2" stroke="#5a5a5a" stroke-width="2.8" stroke-linecap="round"/><circle cx="884.3" cy="633.8" r="6.1" fill="url(#gMag)" stroke="#6e6e6e" stroke-width="1.5"/><path d="M880.8,631.8 Q883.3,629.3 886.8,630.3" fill="none" stroke="#ffffff" stroke-width="1" opacity="0.8"/></g>
<rect x="906.5" y="629.5" width="60" height="21" fill="#fff" stroke="#a5a5a5" stroke-width="1" />
<rect x="980.5" y="629.5" width="88" height="21" fill="#fff" stroke="#a5a5a5" stroke-width="1" />
<text x="1036.26" y="644.90" font-size="12" font-weight="normal" fill="#000" textLength="28.18" lengthAdjust="spacingAndGlyphs" >0.00</text>
<rect x="1079.5" y="629.5" width="88" height="21" fill="#fff" stroke="#a5a5a5" stroke-width="1" />
<text x="1135.76" y="644.90" font-size="12" font-weight="normal" fill="#000" textLength="28.18" lengthAdjust="spacingAndGlyphs" >0.00</text>
<text x="861.49" y="676.00" font-size="12.5" font-weight="bold" fill="#111111" textLength="112.05" lengthAdjust="spacingAndGlyphs" >Amount to Pay:</text>
<rect x="980.5" y="660.5" width="88" height="22" fill="#fff" stroke="#a5a5a5" stroke-width="1" />
<text x="1013.56" y="676.00" font-size="12" font-weight="normal" fill="#000" textLength="51.06" lengthAdjust="spacingAndGlyphs" >5100.00</text>
<text x="643.60" y="706.00" font-size="12.5" font-weight="bold" fill="#111111" textLength="113.14" lengthAdjust="spacingAndGlyphs" >Currency/Rate:</text>
<rect x="760.5" y="690.5" width="73" height="21" fill="#fff" stroke="#a0a8b0" stroke-width="1" />
<rect x="817" y="691" width="16" height="20" fill="url(#gDrop)"/>
<rect x="817.5" y="691.5" width="15" height="19" fill="none" stroke="#c3d3f0"/>
<path d="M821.2,699.2 L825.0,703.0 L828.8,699.2" fill="none" stroke="#3a4658" stroke-width="2"/>
<line x1="816.5" y1="691" x2="816.5" y2="711" stroke="#9aa4b4"/>
<text x="765.92" y="706.00" font-size="12" font-weight="normal" fill="#000" textLength="45.17" lengthAdjust="spacingAndGlyphs" >default</text>
<rect x="835.5" y="690.5" width="60" height="22" fill="#fff" stroke="#a5a5a5" stroke-width="1" />
<text x="839.10" y="706.00" font-size="12" font-weight="normal" fill="#000" >1</text>
<text x="911.39" y="706.30" font-size="12.5" font-weight="bold" fill="#111111" textLength="62.16" lengthAdjust="spacingAndGlyphs" >Amount:</text>
<rect x="980.5" y="690.5" width="88" height="22" fill="#fff" stroke="#a5a5a5" stroke-width="1" />
<text x="983.32" y="706.00" font-size="12" font-weight="normal" fill="#000" textLength="52.10" lengthAdjust="spacingAndGlyphs" >5100.00</text>
<rect x="639.5" y="729.5" width="12" height="12" fill="url(#gChk)" stroke="#2c3440"/>
<text x="662.50" y="743.60" font-size="12.5" font-weight="bold" fill="#111111" textLength="56.55" lengthAdjust="spacingAndGlyphs" >On Hold</text>
<rect x="17.5" y="720.5" width="122" height="23" rx="2" fill="url(#gGreen)" stroke="#6a9a6a"/>
<path d="M23.5,724.5 H31 L33.5,727 V738.5 H23.5 Z" fill="#fbf6fa" stroke="#7a7a80"/>
<path d="M29,727.5 L30.3,730.6 L33.5,730.8 L31,733 L31.8,736.2 L29,734.4 L26.2,736.2 L27,733 L24.5,730.8 L27.7,730.6 Z" fill="#f0a018"/>
<path d="M31.5,736.5 H39.5 M35.5,732.5 V740.5" stroke="#4a4a10" stroke-width="3.4"/>
<path d="M31.5,736.5 H39.5 M35.5,732.5 V740.5" stroke="#d8d040" stroke-width="1.6"/>
<text x="41.99" y="736.70" font-size="13.5" font-weight="bold" fill="#2a7a2a" textLength="93.20" lengthAdjust="spacingAndGlyphs" >5 MORE LINES</text>
<rect x="205.5" y="720.5" width="113" height="23" rx="2" fill="url(#gPost)" stroke="#7a827a"/>
<circle cx="222.5" cy="735.5" r="4.8" fill="#f4f4f8" stroke="#a8a8b4" stroke-width="1.4"/>
<path d="M211.5,730.5 L216.5,724 L221.5,730.5 H219.5 V738 H213.5 V730.5 Z" fill="url(#gArrow)" stroke="#1a2200" stroke-width="1.3" stroke-linejoin="round"/>
<text x="241.79" y="736.70" font-size="14" font-weight="bold" fill="#3e5e3e" textLength="62.39" lengthAdjust="spacingAndGlyphs" >Post Print</text>
<rect x="333.5" y="720.5" width="112" height="23" rx="2" fill="url(#gPost)" stroke="#7a827a"/>
<circle cx="350.5" cy="735.5" r="4.8" fill="#f4f4f8" stroke="#a8a8b4" stroke-width="1.4"/>
<path d="M339.5,730.5 L344.5,724 L349.5,730.5 H347.5 V738 H341.5 V730.5 Z" fill="url(#gArrow)" stroke="#1a2200" stroke-width="1.3" stroke-linejoin="round"/>
<text x="369.59" y="736.70" font-size="14" font-weight="bold" fill="#3e5e3e" textLength="67.94" lengthAdjust="spacingAndGlyphs" >Post Close</text>
<rect x="460.5" y="720.5" width="113" height="23" rx="2" fill="url(#gPost)" stroke="#7a827a"/>
<circle cx="477.5" cy="735.5" r="4.8" fill="#f4f4f8" stroke="#a8a8b4" stroke-width="1.4"/>
<path d="M466.5,730.5 L471.5,724 L476.5,730.5 H474.5 V738 H468.5 V730.5 Z" fill="url(#gArrow)" stroke="#1a2200" stroke-width="1.3" stroke-linejoin="round"/>
<text x="496.49" y="736.70" font-size="14" font-weight="bold" fill="#3e5e3e" textLength="59.24" lengthAdjust="spacingAndGlyphs" >Post Add</text>
<rect x="4" y="775" width="1180" height="22" fill="url(#gStatus)" />
<rect x="4" y="775" width="1180" height="1" fill="#d4d6da" />
<text x="8.82" y="789.70" font-size="11" font-weight="normal" fill="#000" textLength="25.68" lengthAdjust="spacingAndGlyphs" >Done</text>
<rect x="1162" y="777" width="1" height="19" fill="#d0d4d8" />
<rect x="1166" y="777" width="1" height="19" fill="#c8ccd0" />
<rect x="1180.5" y="785" width="2" height="2" fill="#b4b8c0" />
<rect x="1176.5" y="789" width="2" height="2" fill="#b4b8c0" />
<rect x="1180.5" y="789" width="2" height="2" fill="#b4b8c0" />
<rect x="1172.5" y="793" width="2" height="2" fill="#b4b8c0" />
<rect x="1176.5" y="793" width="2" height="2" fill="#b4b8c0" />
<rect x="1180.5" y="793" width="2" height="2" fill="#b4b8c0" />
</svg>
</body></html>
